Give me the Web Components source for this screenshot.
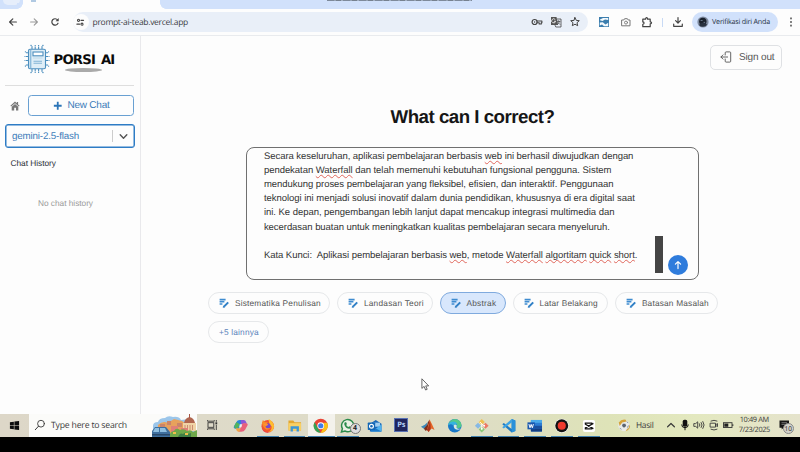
<!DOCTYPE html>
<html lang="id">
<head>
<meta charset="utf-8">
<title>Porsi AI</title>
<style>
html,body{margin:0;padding:0;width:800px;height:452px;overflow:hidden;background:#fdfdfd}
body{font-family:"Liberation Sans",Arial,sans-serif;text-rendering:geometricPrecision}
</style>
</head>
<body>
<porsi-screen></porsi-screen>
<script>
// Base class: renders the markup returned by view() into an open shadow root.
class Base extends HTMLElement{
  connectedCallback(){
    if(!this.shadowRoot){this.attachShadow({mode:'open'}).innerHTML=this.view();}
    if(this.ready)this.ready();
  }
}
const def=(n,view,ready)=>{
  const C=class extends Base{view(){return view(this)}};
  if(ready)C.prototype.ready=ready;
  customElements.define(n,C);
};

// One line of text whose tracking is adjusted to a given advance width.
def('fit-line',()=>`<style>:host{display:inline-block;white-space:pre;flex:none;width:max-content}</style><slot></slot>`,function(){
  const w=+this.getAttribute('w'),n=this.textContent.length;
  this.style.letterSpacing='0px';
  this.style.letterSpacing=((w-this.getBoundingClientRect().width)/n)+'px';
  this.style.width=w+'px';
});

const S='fill="none" stroke="currentColor" stroke-linecap="round" stroke-linejoin="round"';
const ICONS={
 back:[12,12,`<path ${S} stroke-width="1.2" d="M9.4 6H2.7M5.8 2.8L2.6 6l3.2 3.2"/>`],
 forward:[12,12,`<path ${S} stroke-width="1.1" d="M2.6 6h6.7M6.2 2.8L9.4 6 6.2 9.2"/>`],
 reload:[12,12,`<path ${S} stroke-width="1.2" d="M9 7.2A3.2 3.2 0 1 1 8.6 4"/><path fill="currentColor" d="M9.7 2v3.2H6.5z"/>`],
 tune:[12,12,`<path ${S} stroke-width="1.3" d="M6.8 3.8h3M2.2 8.2h3"/><circle cx="4" cy="3.8" r="1.2" ${S} stroke-width="1.2"/><circle cx="8" cy="8.2" r="1.2" ${S} stroke-width="1.2"/>`],
 key:[12,12,`<circle cx="3.6" cy="6" r="2.5" ${S} stroke-width="1.2"/><circle cx="3.6" cy="6" r=".7" fill="currentColor"/><path ${S} stroke-width="1.1" d="M6.1 5h4.8v1.8h-.6v1.2H8.2V6.8H6.1"/>`],
 translate:[12,12,`<path fill="#555" d="M1 1h5.5l1.6 8H1z"/><path ${S} stroke-width=".8" d="M7 3h4v8H5.8L5 9.2"/><path stroke="#fff" stroke-width=".8" fill="none" d="M5.3 3.7A2 2 0 1 0 5.6 5.3H4"/><path ${S} stroke-width=".7" d="M7.3 5.4H10M8.6 4.7v.7M9.4 5.5C9 7 8.3 7.8 7.6 8.3M8 6.5l2 2"/>`],
 star:[12,12,`<path ${S} stroke-width="1" d="M6 1.6l1.3 2.8 3 .3-2.3 2 .7 3L6 8.200l-2.700 1.500.7-3-2.300-2 3-.3z"/>`],
 shot:[12,12,`<path fill="#3c7eae" d="M1 1h10v10H1z"/><path fill="#f4f9fc" d="M5 2h5.200v2L7 3.600 4.500 5 2 4.200V3.400zM1.800 6.600l3-.4L7.500 8.400l2.700-1.600v3.400H6L4 8.600l-2.200 1z"/>`],
 camera:[12,12,`<path ${S} d="M2 4h1.800l.8-1.300h2.800L8.200 4H10v5.800H2z"/><circle cx="6" cy="6.600" r="1.500" ${S} stroke-width=".9"/>`],
 puzzle:[12,12,`<path ${S} stroke-width="1.200" d="M1.800 3.200h2.800c-.2-2 2.200-2 2 0h2.600v2.600c1.800 0 1.800 2 0 2v2.900H1.800V8.300c1.700-.2 1.700-2.200 0-2.400z"/>`],
 download:[12,12,`<path ${S} stroke-width="1.200" d="M6 1.500v5.300M3.600 4.700L6 7.100l2.400-2.400M1.700 8v2.300h8.600V8"/>`],
 dots:[12,12,`<g fill="#555"><rect x="5.200" y="1.500" width="1.600" height="1.800"/><rect x="5.200" y="5.100" width="1.600" height="1.800"/><rect x="5.200" y="8.700" width="1.600" height="1.800"/></g>`],
 avatar:[12,12,`<circle cx="6" cy="6" r="5.600" fill="#7f8ba0"/><circle cx="5.800" cy="5.400" r="3.700" fill="#1b222d"/><path fill="#28313f" d="M2 9c2-3 6-3 8-.3A5 5 0 0 1 2 9z"/><path stroke="#7c8ba0" stroke-width=".8" d="M3.600 4.500h2M6.600 6.400h1.500"/>`],
 chip:[26,30,`<g stroke="#4d8fbe" fill="none" stroke-width="1.100"><rect x="4.500" y="5.200" width="17" height="19.600" rx="1.500" fill="#dfeef7"/><path stroke="#8ebcdc" stroke-width="1.600" d="M6.600 6v18"/><rect x="9" y="8" width="10" height="3.800" fill="#fff"/><path stroke-width="1" d="M9 14h9.500" stroke="#bfdaea"/><path d="M9.500 17.300H18M9.500 19.200H18" stroke="#83b4d5"/><path d="M8 5V2.500L6.600 1M11.200 5V1M14.600 5V1M18 5V2.500L19.400 1M8 25v2.500L6.600 29M11.200 25v4M14.600 25v4M18 25v2.500l1.400 1.500M4.500 8.800H2.400L1 7.500M4.500 12.500H.5M4.500 16.500H.5M4.500 21H2.400L1 22.500M21.500 8.800h2L25 7.500M21.500 12.500h4M21.500 16.500h4M21.500 21h2l1.500 1.500" stroke-dasharray="2.600 .5"/></g>`],
 home:[10,10,`<path fill="#777" d="M5 .6L.4 4.800l.7.700L5 2.200l3.900 3.300.7-.7-1.500-1.400V1H6.800v1.200zM1.700 5.800L5 3l3.300 2.800v3.600H6V6.700H4.200v2.700H1.700z"/>`],
 plus:[10,10,`<path stroke="#2b75b8" stroke-width="1.900" d="M5 .9v8.200M.9 5h8.200"/>`],
 chevron:[10,10,`<path ${S} stroke-width="1.300" d="M2 3.500l3 3 3-3"/>`],
 signout:[12,12,`<path ${S} stroke-width=".9" d="M5.200 4V1.800Q5.200.9 6.100.9h3.700q.9 0 .9.900v8.400q0 .9-.9.900H6.100q-.9 0-.9-.9V8M7.600 6H1M3 3.900L.9 6 3 8.100"/>`],
 up:[10,10,`<path ${S} stroke-width="1.200" d="M5 8.600V1.700M2.400 4.200L5 1.600l2.600 2.600"/>`],
 edit:[10,10,`<path stroke="#3f8cd0" stroke-width="1.600" d="M.6 1.600h6M.6 3.800h4.800M.6 6h2.800"/><path stroke="#2f7fc6" stroke-width="2" d="M5 8.600l4.200-4.200"/><path fill="#2f7fc6" d="M3.800 9.800l.3-2.300L6.200 9.500z"/>`],
 pointer:[9,13,`<path fill="#fff" stroke="#555" stroke-width=".9" stroke-linejoin="round" d="M.9.800v9.600l2.200-2 1.500 3.600 1.600-.7-1.500-3.400h3z"/>`],
 windows:[12,12,`<path fill="#0c0c0c" d="M1 2.500l4.300-.7v3.900H1zM5.900 1.700L11 1v4.700H5.900zM1 6.300h4.300v3.900L1 9.500zM5.900 6.300H11V11l-5.100-.7z"/>`],
 search:[12,12,`<circle cx="7" cy="4.700" r="3.400" ${S} stroke-width=".9"/><path ${S} stroke-width="1" d="M4.500 7.200L1.300 10.700"/>`],
 taskview:[12,12,`<g fill="none" stroke="#333" stroke-width=".9"><rect x="2" y="3.700" width="5.800" height="4.600"/><path d="M1.500 1.200v1h6.800v-1M1.500 10.800v-1h6.800v1M10.300 1v1.800M10.300 5.800V11"/></g><rect x="9.400" y="3.300" width="1.800" height="2" fill="#333"/>`],
 city:[45,23,`<path fill="#9cc6ea" d="M1 23V12q0-4 5-4 1-4 7-4 3-3 8-1 6-1 8 3l8-1 7 5v13z"/><path fill="#e7a15c" d="M6 11q5-5 10-2l6-4 8 2 5 4v8H6z"/><path fill="#c9846a" d="M8 10h5v3H8zM15 7h4v4h-4zM25 9h5v4h-5z"/><path fill="#f0d3a6" d="M31 9h13v8H31z"/><path fill="#b0664f" d="M32 9q1-5 5.500-6Q42 4 43 9z"/><path stroke="#a95545" d="M37.500 0v4"/><path stroke="#c47b64" stroke-width=".8" d="M33 11v5M35.500 11v5M38 11v5M40.500 11v5"/><path fill="#df7f78" d="M19 12h7v6h-7zM29 14h7v4h-7z"/><path fill="#6fa84a" d="M17 23q1-6 5-6 2-4 6-1 4-2 7 1 4-2 6 1l4-2v7z"/><path fill="#417f46" d="M26 23q2-5 5-3 3-3 5 0l3-1v4z"/><path fill="#f0c04a" d="M21 18h3v2h-3zM33 19h3v2h-3z"/><path fill="#3f6f9e" d="M0 23v-6l3-4h11l4 5v5z"/><path fill="#8fbfe0" d="M3 14h4v4H1zM8 14h5l2 4H8z"/><path fill="#29496b" d="M0 20h18v1.500H0z"/>`],
 copilot:[16,16,`<path fill="#2a88d8" d="M1 8.500L3.500 4q1-2 3.500-2h3.500L8.500 6 6 11H3q-3 0-2-2.500z"/><path fill="#53b45c" d="M1.500 8l2-4L7 6.500l-2 4.200H3Q.8 10.500 1.500 8z"/><path fill="#8a58d8" d="M8 2h3q2 0 2.500 2l1 2H11q-2 0-2.600 2z"/><path fill="#e8607b" d="M15 7.500L12.500 12q-1 2.200-4 2.200H5.500L8 9.500l2-4h3.300q2.500 0 1.700 2z"/><path fill="#f0a447" d="M4.500 10.500H8l-1.300 3.700Q4 14.500 3.500 12.500L3 10.500z"/><path fill="#eee" d="M7 6.500h2.400L8.700 9.500H6.400z"/>`],
 firefox:[16,16,`<circle cx="8" cy="8.500" r="6.500" fill="#f4552e"/><path fill="#ffbd2e" d="M9 1q5 3 5.500 7 0 6-6 6.500 4-2 3.500-6-1 0-2-2T9 1z"/><path fill="#f88a28" d="M2 5l1-3 2 2 3 .5L6 7q0 3 3 3l2-1q-1 3-4 3-4-1-5-7z"/><circle cx="8.300" cy="8" r="2.600" fill="#7a49c8"/><path fill="#ff9330" d="M3 6l4-.6L8.500 7 6 8.400z"/><path fill="#e53058" d="M2 10q2 5 7 4.500l-1 .6Q3 15 2 10z"/>`],
 folder:[16,16,`<path fill="#e3a72f" d="M1.500 2.500h5l1.300 1.800h6.700V13h-13z"/><path fill="#f8d065" d="M1.500 5.300h13V13h-13z"/><path fill="#3b96d6" d="M3.700 8.500h8.600V14h-2.400v-3H6.100v3H3.700z"/>`],
 chrome:[16,16,`<circle cx="8" cy="8" r="7.300" fill="#e94335"/><path fill="#34a353" d="M1.700 4.300L6 12l2 3.300A7.300 7.300 0 0 1 1.700 4.300z"/><path fill="#fbc116" d="M8 15.300L11.200 9 10.700 5h4A7.300 7.300 0 0 1 8 15.300z"/><circle cx="8" cy="8" r="3.500" fill="#fff"/><circle cx="8" cy="8" r="2.700" fill="#3f7de8"/>`],
 whatsapp:[16,16,`<path fill="#e9f1e4" stroke="#2b8b4b" stroke-width="1.500" d="M1.500 14.400l1-3.400a6.300 6.300 0 1 1 2.500 2.400z"/><path fill="#2b8b4b" d="M5 4.300l1.400.1.700 1.900-.7.900q.8 1.600 2.300 2.200l1-.9 1.800.9q0 1.600-1.800 1.800Q6 11 4.500 7q-.4-1.700.5-2.700z"/>`],
 outlook:[16,16,`<path fill="#1a66b5" d="M3 6l6-4 6 4v8H3z"/><path fill="#9fcdf0" d="M6 4.800h7.500V9H6z"/><path fill="#4fb1ee" d="M15 6.500V14H4l5-3z"/><path fill="#1c79cb" d="M4 8l11 6H4z"/><rect x=".8" y="4.700" width="7.600" height="7.600" rx=".8" fill="#1266b5"/><circle cx="4.600" cy="8.500" r="2" fill="none" stroke="#fff" stroke-width="1.200"/>`],
 matlab:[16,16,`<path fill="#3d88b8" d="M1 9l4-2 3-3-1.500 6L4 11z"/><path fill="#7c2d1d" d="M4 11l3.500-4Q8.500 3 9.800 1.500L8.500 11 6 13.500z"/><path fill="#e5662a" d="M9.800 1.500Q12 5 15 12.500l-3-1.700Q10.500 12 9 14.500L7 12Q9 8 9.800 1.500z"/><path fill="#a7331d" d="M9.800 1.500q.5 6-2.800 10.700L9 14.500q.8-2 2-3.200Q11 5 9.800 1.500z"/>`],
 edge:[16,16,`<circle cx="8" cy="8" r="7" fill="#1978c8"/><path fill="#55c98a" d="M2 5q2.500-4 6.500-4Q15 2 15 8q-.5 2.700-4 2.500-1.500-.5-.5-2Q10.500 5 7 5 4 5 2 7z"/><path fill="#35b4de" d="M1 8q.5-4 5-4.500 4 0 4.700 3.500Q8 5.500 6.500 8 4 5 1 8z"/><path fill="#d9e9de" d="M10.300 8q-1.300 2.500 1.200 3H14q-3 2-6 0-1.500-1.500-1-3.500Q8.500 5.800 10.300 8z"/>`],
 git:[16,16,`<g transform="rotate(45 8 8)"><rect x="3" y="3" width="4.500" height="4.500" fill="#efc052"/><rect x="8.500" y="3" width="4.500" height="4.500" fill="#eb7865"/><rect x="3" y="8.500" width="4.500" height="4.500" fill="#86b9e4"/><rect x="8.500" y="8.500" width="4.500" height="4.500" fill="#8cc878"/></g><path stroke="#fff" stroke-width=".9" d="M6 4l4 4M8 6v6"/><circle cx="8" cy="11" r="1" fill="#fff"/><circle cx="10.500" cy="8" r="1" fill="#fff"/>`],
 vscode:[16,16,`<path fill="#1f7ac2" d="M11 1l3.800 1.700v10.600L11 15 1.300 6.500l1.600-1.300L11 11.300z"/><path fill="#3ba3e6" d="M11 1v3.700l-8.100 6.100-1.600-1.300z"/><path fill="#2a91da" d="M11 1l3.800 1.700v10.600L11 15z"/>`],
 word:[16,16,`<rect x="4" y="2" width="11.500" height="12" rx=".8" fill="#2b7cd3"/><path fill="#49a9ea" d="M4 2h11.500v3H4z"/><path fill="#1a4f9f" d="M4 8h11.500v3H4z"/><path fill="#133e83" d="M4 11h11.500v3H4z"/><rect x=".5" y="4.500" width="7.600" height="7.200" fill="#1957ae"/><path fill="none" stroke="#fff" stroke-width="1" d="M2 6.300l1.100 3.800 1.200-3.500 1.200 3.500 1.100-3.800"/>`],
 record:[16,16,`<circle cx="8" cy="8" r="7.200" fill="#fff"/><circle cx="8" cy="8" r="6.700" fill="#121212"/><circle cx="8" cy="8" r="4.200" fill="#ee3a2d"/>`],
 capcut:[16,16,`<rect x="2" y="2" width="12.500" height="12.500" rx="2" fill="#fff"/><path fill="none" stroke="#111" stroke-width="1.300" d="M12.800 5.500L4.500 10.200V11.300H11V10.200M4.500 6.800V5.200H11V6.200M12.800 11L4.500 6.500"/>`],
 ball:[16,16,`<circle cx="8" cy="8.500" r="6.500" fill="#e9ebe8"/><path fill="#d6a33a" d="M2 5q3-4 8-3l1 2-5 1-3 4z"/><path fill="#5c6472" d="M6.500 6.500h3l1 2.600L8 11 5.700 9z"/><path fill="#8b93a1" d="M2.500 11l2 .6 1 2.400M13.800 8l-2 1.500.3 3zM11 3.500l.5 2 2 .5z"/><path fill="#d9a845" d="M11 13l2.500-2 .5-4 1 3q-1 4-5 5z"/>`],
 caret:[12,12,`<path ${S} stroke-width="1.200" d="M2.600 7.800L6 4.500l3.400 3.300"/>`],
 mic:[12,12,`<rect x="3.700" y=".8" width="4.600" height="7" rx="1.800" fill="#111"/><path fill="none" stroke="#111" stroke-width="1" d="M2.700 5.500q0 3.200 3.300 3.200T9.300 5.500M6 8.500v2.700"/>`],
 speaker:[12,12,`<path ${S} stroke-width=".9" d="M1.200 4.600h1.500l2-1.800v6.400l-2-1.800H1.200zM6.500 4.700q1 1.300 0 2.600M8.200 3.500q1.900 2.500 0 5M9.900 2.500q2.600 3.500 0 7"/>`],
 meet:[12,12,`<path ${S} stroke-width=".9" d="M2.500 4.200h5v3.900h-5zM7.500 5.800l2-1.200v3l-2-1.200M3 2q3-1.500 6 0M3 10.300q3 1.500 6 0"/>`],
 battery:[12,12,`<rect x="1.500" y="3.700" width="8.500" height="4.800" fill="none" stroke="#333" stroke-width=".9"/><path fill="#222" d="M2.300 4.500h4v3.200h-4zM10.400 5.200h.9v1.900h-.9z"/>`],
 notify:[12,12,`<path fill="#161616" d="M1.500 1.500h9.500v7.200H5.500L3.700 10.500V8.700H1.500z"/><path stroke="#aaa" stroke-width=".6" d="M3.500 3.700H9M3.500 5.400H9"/>`]
};
def('ui-icon',e=>{
  const [w,h,p]=ICONS[e.getAttribute('name')];const s=+(e.getAttribute('size')||w);
  return `<style>:host{display:block;flex:none;width:${s}px;height:${s*h/w}px}svg{display:block}</style><svg width="${s}" height="${s*h/w}" viewBox="0 0 ${w} ${h}">${p}</svg>`;
});

def('tab-strip',()=>`<style>
:host{display:grid;grid-template-columns:23px 137px 1fr;height:9px;background:#d1e1fb;overflow:hidden;position:relative}
.pill{width:17px;height:5px;margin-left:3px;border-radius:0 0 6px 6px;background:#e6eefb}
.tab{background:#fdfdfd;position:relative}
.tab:before,.tab:after{content:"";position:absolute;bottom:0;width:6px;height:6px}
.tab:before{left:-6px;background:radial-gradient(circle at 0 0,#d1e1fb 5.500px,#fdfdfd 6px)}
.tab:after{right:-6px;background:radial-gradient(circle at 100% 0,#d1e1fb 5.500px,#fdfdfd 6px)}
.fav{width:5px;height:1.500px;margin-left:8px;background:#b0c9e2}
.edge{width:145px;height:1.300px;margin-left:167px;background:repeating-linear-gradient(90deg,#7e8a9b 0 7px,#95a2b4 7px 9px,#76818f 9px 14px,#a2afc2 14px 16px);filter:blur(.4px)}
</style><div class="pill"></div><div class="tab"><div class="fav"></div></div><div class="edge"></div>`);

def('browser-bar',()=>`<style>
:host{display:flex;align-items:center;height:27px;box-sizing:border-box;border-bottom:1px solid #e9ebee;background:#fdfdfd;color:#444;padding:0 3px 0 7px;font-family:"Open Sans","Noto Sans",sans-serif}
.nav{display:flex;gap:8.500px;width:66px}
.nav ui-icon:nth-child(3){margin-left:1px}
.omni{display:flex;align-items:center;width:515px;height:20px;border-radius:10px;background:#e9eff8;box-sizing:border-box;padding:0 7px 0 0}
.site{width:16px;height:16px;margin-left:-.5px;border-radius:50%;background:#fdfdfd;display:grid;place-items:center}
.url{font-size:8.500px;margin-left:4px;flex:1;color:#3d4147}
.end{display:flex;gap:7px}
.ext{display:flex;margin-left:10px;gap:9.500px}
.sep{width:1px;height:9px;background:#c8daf5;margin:0 9px 0 9px}
.id{display:flex;align-items:center;height:20.500px;width:86px;margin-left:8px;border-radius:11px;background:#d1e1fb;box-sizing:border-box;padding-left:5px;gap:3px;font-size:7.200px;color:#273446}
.dots{margin-left:7px}
</style>
<div class="nav"><ui-icon name="back"></ui-icon><ui-icon name="forward" style="color:#999"></ui-icon><ui-icon name="reload"></ui-icon></div>
<div class="omni"><div class="site"><ui-icon name="tune" size="10.500"></ui-icon></div><div class="url"><fit-line w="95.500">prompt-ai-teab.vercel.app</fit-line></div><div class="end"><ui-icon name="key"></ui-icon><ui-icon name="translate"></ui-icon><ui-icon name="star"></ui-icon></div></div>
<div class="ext"><ui-icon name="shot"></ui-icon><ui-icon name="camera" style="color:#777"></ui-icon><ui-icon name="puzzle"></ui-icon></div>
<div class="sep"></div><ui-icon name="download"></ui-icon>
<div class="id"><ui-icon name="avatar"></ui-icon><fit-line w="58">Verifikasi diri Anda</fit-line></div>
<ui-icon class="dots" name="dots"></ui-icon>`);

def('brand-logo',()=>`<style>
:host{display:flex;height:31px;padding-left:19px;gap:3.500px}
ui-icon{margin-top:.5px}
.w{padding-top:11px;color:#0b0b0b;font:700 13.200px/13px "DejaVu Sans",Inter,sans-serif;word-spacing:2px}
.s{width:37px;height:4px;border-radius:50%;background:#aaa;margin:.5px 0 0 11px}
</style><ui-icon name="chip"></ui-icon><div class="w"><fit-line w="61">PORSI AI</fit-line><div class="s"></div></div>`);

def('side-bar',()=>`<style>
:host{display:flex;flex-direction:column;width:141px;box-sizing:border-box;border-right:1px solid #e9e9ec;padding:7px 5px 0 5px;background:#fdfdfd}
hr{border:0;height:1px;background:#dedede;margin:11px 0 9px;width:129px}
.row{display:flex;align-items:center;gap:7.500px;padding-left:5px}
.new{display:flex;align-items:center;width:106.500px;height:21px;box-sizing:border-box;border:1px solid #69a0d2;border-radius:3.500px;padding-left:24.500px;gap:5px;color:#3c7cb9;font-size:10px;line-height:12px}
.sel{display:flex;align-items:center;width:130px;height:24px;margin-top:8px;box-sizing:border-box;border:1px solid #2e7cc5;box-shadow:inset 0 0 0 .5px #2e7cc5;border-radius:3px;padding-left:6px;color:#3c7cb9;font-size:9.800px}
.bar{width:1px;height:12px;background:#ccc;margin-left:33px}
.sel ui-icon{margin-left:5px;color:#555}
h4{font-weight:400;font-size:8.300px;line-height:10px;margin:10px 0 0 5.500px;color:#2b2f36}
p{font-size:8.300px;line-height:10px;margin:30px 0 0 33px;color:#9b9b9b}
</style>
<brand-logo></brand-logo><hr>
<div class="row"><ui-icon name="home"></ui-icon><div class="new"><ui-icon name="plus" size="9.500"></ui-icon><fit-line w="42">New Chat</fit-line></div></div>
<div class="sel"><fit-line w="67">gemini-2.5-flash</fit-line><div class="bar"></div><ui-icon name="chevron" size="11"></ui-icon></div>
<h4><fit-line w="45.500">Chat History</fit-line></h4><p><fit-line w="55">No chat history</fit-line></p>`);

def('prompt-box',()=>`<style>
:host{display:block;position:relative;width:453px;height:133px;box-sizing:border-box;border:1px solid #707070;border-radius:8px;background:#fdfdfd;padding:1.900px 0 0 16.500px;color:#333;font-size:9.500px;line-height:14.130px}
fit-line{display:block}
u{text-decoration:underline wavy #e0675c .6px;text-underline-offset:1.200px;text-decoration-skip-ink:none}
.gap{height:14.130px}
.thumb{position:absolute;left:408px;top:88px;width:8px;height:37px;background:#454545}
.go{position:absolute;left:421px;top:106.500px;width:20px;height:20px;border-radius:50%;background:#2f7cdc;color:#fff;display:grid;place-items:center}
</style>
<fit-line w="369.500">Secara keseluruhan, aplikasi pembelajaran berbasis <u>web</u> ini berhasil diwujudkan dengan</fit-line>
<fit-line w="347.500">pendekatan <u>Waterfall</u> dan telah memenuhi kebutuhan fungsional pengguna. Sistem</fit-line>
<fit-line w="349.500">mendukung proses pembelajaran yang fleksibel, efisien, dan interaktif. Penggunaan</fit-line>
<fit-line w="371">teknologi ini menjadi solusi inovatif dalam dunia pendidikan, khususnya di era digital saat</fit-line>
<fit-line w="350.500">ini. Ke depan, pengembangan lebih lanjut dapat mencakup integrasi multimedia dan</fit-line>
<fit-line w="346">kecerdasan buatan untuk meningkatkan kualitas pembelajaran secara menyeluruh.</fit-line>
<div class="gap"></div>
<fit-line w="373.500">Kata Kunci:  Aplikasi pembelajaran berbasis <u>web</u>, metode <u>Waterfall</u> <u>algortitam</u> <u>quick</u> <u>short</u>.</fit-line>
<div class="thumb"></div><div class="go"><ui-icon name="up"></ui-icon></div>`);

def('topic-chip',e=>`<style>
:host{display:flex;align-items:center;box-sizing:border-box;height:22.500px;border:1px solid #e6e8ea;border-radius:12px;padding-left:10px;gap:5.500px;color:#555;font-size:8.300px;line-height:10px;background:#fdfdfd}
:host([active]){background:#d8e7fc;border-color:#7faade}
:host([more]){color:#5a83bb;padding-left:9.500px}
</style>${e.hasAttribute('more')?'':'<ui-icon name="edit"></ui-icon>'}<slot></slot>`);

def('main-pane',()=>`<style>
:host{display:flex;flex-direction:column;flex:1;background:#fdfdfd;min-width:0}
.out{align-self:flex-end;display:flex;align-items:center;gap:7.500px;width:72px;height:25.500px;margin:8.500px 18px 0 0;box-sizing:border-box;border:1px solid #dfe1e4;border-radius:5px;padding-left:8.500px;color:#555;font-size:10px}
h1{margin:36px 0 0 249.500px;font-size:18.700px;line-height:22px;color:#161616;height:22px}
prompt-box{margin:19px 0 0 105.400px}
.chips{display:flex;flex-wrap:wrap;gap:6.500px 7px;margin:11.500px 0 0 67.400px;width:520px}
</style>
<div class="out"><ui-icon name="signout"></ui-icon><fit-line w="35.500">Sign out</fit-line></div>
<h1><fit-line w="164">What can I correct?</fit-line></h1>
<prompt-box></prompt-box>
<div class="chips">
<topic-chip style="width:122px"><fit-line w="86">Sistematika Penulisan</fit-line></topic-chip>
<topic-chip style="width:95.500px"><fit-line w="60">Landasan Teori</fit-line></topic-chip>
<topic-chip active style="width:66px"><fit-line w="30">Abstrak</fit-line></topic-chip>
<topic-chip style="width:95.500px"><fit-line w="58.500">Latar Belakang</fit-line></topic-chip>
<topic-chip style="width:103px"><fit-line w="67">Batasan Masalah</fit-line></topic-chip>
<topic-chip more style="width:60.500px"><fit-line w="40">+5 lainnya</fit-line></topic-chip>
</div>`);

def('task-app',e=>`<style>
:host{display:grid;place-items:center;width:26.750px;height:100%;position:relative;flex:none}
:host([running]):after{content:"";position:absolute;left:2.500px;right:2.500px;bottom:0;height:1.500px;background:#4180ad}
:host([active]){background:#f3f2ec}:host([active]):after{left:0;right:0}
.b{position:absolute;left:15px;top:9.500px;width:9px;height:9px;border-radius:50%;background:#ddd;border:.5px solid #777;color:#222;font:bold 7px/9px "Open Sans",sans-serif;text-align:center}
.ps{width:12px;height:12px;background:#20255c;border:.5px solid #5871b4;color:#b4cff5;font:bold 7.500px/12px "Open Sans",sans-serif;text-align:center}
</style>${e.hasAttribute('name')?`<ui-icon name="${e.getAttribute('name')}" size="15.500"></ui-icon>`:'<div class="ps">Ps</div>'}${e.hasAttribute('badge')?`<div class="b">${e.getAttribute('badge')}</div>`:''}`);

def('task-bar',()=>`<style>
:host{display:flex;align-items:center;height:23.500px;background:linear-gradient(90deg,#ddd7c8 0,#dedac9 25%,#deddc6 58%,#dee3b8 76%,#e3e8bf 87%,#e5e3cc 100%);color:#3a3a3a;font-family:"Open Sans","Noto Sans",sans-serif}
.start{width:28.500px;display:grid;place-items:center}
.find{display:flex;align-items:center;width:168.500px;height:22.500px;background:#fbfbf9;padding-left:5.500px;box-sizing:border-box;font-size:8.700px;gap:5px}
.find ui-icon[name=city]{margin-left:20px}
.tv{width:30.500px;display:grid;place-items:center}
.apps{display:flex;height:100%;width:375.500px}
.tray{display:flex;align-items:center;gap:2.400px;margin-left:11.200px}
.res{display:flex;align-items:center;gap:5.500px;font-size:8.300px;width:37px;margin-left:13.500px}
.clock{margin-left:4.500px;font-size:7.400px;line-height:10.200px;width:31px;display:flex;flex-direction:column;align-items:center}
.note{position:relative;margin-left:8.500px}
.n{position:absolute;left:4.500px;top:3.500px;width:9px;height:9px;border-radius:50%;background:#d3d3cb;border:.5px solid #888;font:6.500px/9px "Open Sans",sans-serif;text-align:center;color:#222}
</style>
<div class="start"><ui-icon name="windows" size="11"></ui-icon></div>
<div class="find"><ui-icon name="search"></ui-icon><fit-line w="76">Type here to search</fit-line><ui-icon name="city"></ui-icon></div>
<div class="tv"><ui-icon name="taskview" size="12"></ui-icon></div>
<div class="apps"><task-app name="copilot"></task-app><task-app name="firefox" running></task-app><task-app name="folder" running></task-app><task-app name="chrome" running active></task-app><task-app name="whatsapp" running badge="4"></task-app><task-app name="outlook"></task-app><task-app></task-app><task-app name="matlab"></task-app><task-app name="edge"></task-app><task-app name="git" running></task-app><task-app name="vscode" running></task-app><task-app name="word" running></task-app><task-app name="record" running></task-app><task-app name="capcut" running></task-app></div>
<div class="res"><ui-icon name="ball" size="14"></ui-icon><fit-line w="17.500">Hasil</fit-line></div>
<div class="tray"><ui-icon name="caret"></ui-icon><ui-icon name="mic"></ui-icon><ui-icon name="speaker"></ui-icon><ui-icon name="meet"></ui-icon><ui-icon name="battery"></ui-icon></div>
<div class="clock"><fit-line w="29">10:49 AM</fit-line><fit-line w="31">7/23/2025</fit-line></div>
<div class="note"><ui-icon name="notify"></ui-icon><div class="n">10</div></div>`);

def('porsi-screen',()=>`<style>
:host{display:flex;flex-direction:column;width:800px;height:452px;background:#000;position:relative;overflow:hidden}
.app{display:flex;height:377.500px;background:#fdfdfd}
.cur{position:absolute;left:420.500px;top:377.500px}
</style><tab-strip></tab-strip><browser-bar></browser-bar><div class="app"><side-bar></side-bar><main-pane></main-pane></div><task-bar></task-bar><ui-icon class="cur" name="pointer"></ui-icon>`);
</script>
</body>
</html>
